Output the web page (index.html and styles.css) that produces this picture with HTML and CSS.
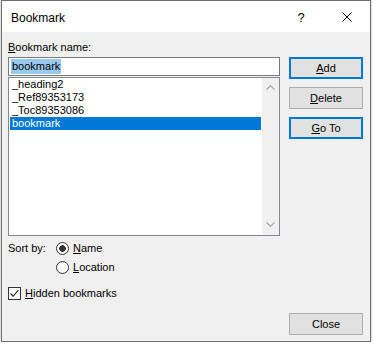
FILE: index.html
```html
<!DOCTYPE html>
<html lang="en">
<head>
  <meta charset="UTF-8" />
  <title>Bookmark</title>
  <link rel="stylesheet" href="styles.css">
</head>
<body>

  <div class="window">
    <!-- Titelleiste -->
    <div class="titlebar">
      <span class="title">Bookmark</span>
      <span class="caption-btn help">?</span>
      <span class="caption-btn">
        <svg width="10" height="10" viewBox="0 0 10 10"><path d="M0.5 0.5 L9.5 9.5 M9.5 0.5 L0.5 9.5" stroke="#000" stroke-width="1" fill="none"/></svg>
      </span>
    </div>

    <div class="content">
      <div class="main">
        <div class="left">
          <div class="field-label"><u>B</u>ookmark name:</div>
          <div class="textbox"><span class="sel">bookmark</span></div>

          <!-- Liste -->
          <div class="listbox">
            <ul class="items">
              <li>_heading2</li>
              <li>_Ref89353173</li>
              <li>_Toc89353086</li>
              <li class="selected">bookmark</li>
            </ul>
            <div class="scrollbar">
              <svg width="9" height="5" viewBox="0 0 9 5"><path d="M0.5 4.5 L4.5 0.8 L8.5 4.5" stroke="#a6a6a6" stroke-width="1.2" fill="none"/></svg>
              <svg width="9" height="5" viewBox="0 0 9 5"><path d="M0.5 0.5 L4.5 4.2 L8.5 0.5" stroke="#a6a6a6" stroke-width="1.2" fill="none"/></svg>
            </div>
          </div>

          <div class="sort">
            <span class="sort-label">Sort by:</span>
            <div class="radios">
              <div class="option"><span class="radio checked"></span><span><u>N</u>ame</span></div>
              <div class="option"><span class="radio"></span><span><u>L</u>ocation</span></div>
            </div>
          </div>

          <div class="option check-row">
            <span class="checkbox">
              <svg width="11" height="11" viewBox="0 0 11 11"><path d="M1.5 5.5 L4.2 8.2 L9.5 2" stroke="#222" stroke-width="1.1" fill="none"/></svg>
            </span>
            <span><u>H</u>idden bookmarks</span>
          </div>
        </div>

        <div class="buttons">
          <button class="btn-default"><u>A</u>dd</button>
          <button><u>D</u>elete</button>
          <button class="btn-default"><u>G</u>o To</button>
        </div>
      </div>

      <div class="footer">
        <button>Close</button>
      </div>
    </div>
  </div>

</body>
</html>
```

FILE: styles.css
```css
body {
  margin: 0;
  background: #fff;
  font-family: "Liberation Sans", Arial, sans-serif;
  font-size: 11px;
  color: #000;
}
.window {
  box-sizing: border-box;
  width: 370px;
  height: 342px;
  margin-left: 1px;
  border: 1px solid #6d6d6d;
  background: #f0f0f0;
  display: flex;
  flex-direction: column;
  box-shadow: 0 0 2px rgba(0,0,0,0.35);
}
.titlebar {
  height: 31px;
  background: #fff;
  display: flex;
  align-items: center;
  padding-left: 9px;
}
.title {
  flex: 1;
  font-size: 12px;
  padding-top: 2px;
}
.caption-btn {
  width: 46px;
  height: 31px;
  display: flex;
  align-items: center;
  justify-content: center;
}
.help {
  font-size: 13px;
  padding-top: 2px;
  box-sizing: border-box;
}
.content {
  flex: 1;
  display: flex;
  flex-direction: column;
  padding: 9px 7px 6px 6px;
}
.main {
  display: flex;
  gap: 9px;
}
.left {
  width: 272px;
}
.field-label {
  line-height: 13px;
  margin-bottom: 3px;
}
.textbox {
  box-sizing: border-box;
  height: 19px;
  border: 1px solid #7a7a7a;
  background: #fff;
  padding: 1px 2px;
}
.sel {
  display: inline-block;
  background: #99c9ef;
  line-height: 15px;
  padding: 0 1px;
}
.listbox {
  box-sizing: border-box;
  height: 159px;
  margin-top: 1px;
  border: 1px solid #828790;
  background: #fff;
  display: flex;
}
.items {
  flex: 1;
  list-style: none;
  margin: 0;
  padding: 0 1px;
}
.items li {
  height: 13px;
  line-height: 13px;
  padding-left: 2px;
}
.items li.selected {
  background: #0078d7;
  color: #fff;
}
.scrollbar {
  width: 17px;
  background: #f0f0f0;
  display: flex;
  flex-direction: column;
  justify-content: space-between;
  align-items: center;
  padding: 7px 0 8px;
  box-sizing: border-box;
}
.scrollbar svg {
  display: block;
}
.sort {
  display: flex;
  margin-top: 6px;
}
.sort-label {
  width: 48px;
  line-height: 13px;
}
.radios {
  display: flex;
  flex-direction: column;
  gap: 6px;
}
.option {
  display: flex;
  align-items: center;
  gap: 4px;
  height: 13px;
  line-height: 13px;
}
.radio {
  box-sizing: border-box;
  width: 13px;
  height: 13px;
  border: 1px solid #333;
  border-radius: 50%;
  background: #fff;
}
.radio.checked {
  background: radial-gradient(circle, #333 0, #333 3px, #fff 3.6px);
}
.check-row {
  margin-top: 13px;
}
.checkbox {
  box-sizing: border-box;
  width: 13px;
  height: 13px;
  border: 1px solid #333;
  background: #fff;
  display: flex;
  align-items: center;
  justify-content: center;
}
.checkbox svg {
  display: block;
}
.buttons {
  width: 74px;
  display: flex;
  flex-direction: column;
  gap: 8px;
  padding-top: 16px;
}
button {
  box-sizing: border-box;
  width: 74px;
  height: 22px;
  padding: 0;
  background: #e1e1e1;
  border: 1px solid #adadad;
  font: inherit;
  color: #000;
}
button.btn-default {
  border: 2px solid #0078d7;
}
.footer {
  margin-top: auto;
  display: flex;
  justify-content: flex-end;
}
```
